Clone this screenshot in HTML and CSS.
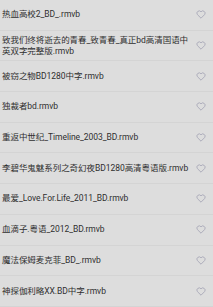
FILE: index.html
```html
<!DOCTYPE html>
<html lang="zh">
<head>
<meta charset="utf-8">
<link rel="stylesheet" href="styles.css">
</head>
<body>
<ul class="list">
  <li class="row"><span class="name">热血高校2_BD_.rmvb</span><svg class="heart" viewBox="0 0 12 11"><path d="M6 10 L1.6 5.6 A2.6 2.6 0 0 1 6 2.2 A2.6 2.6 0 0 1 10.4 5.6 Z"/></svg></li>
  <li class="row"><span class="name">致我们终将逝去的青春_致青春_真正bd高清国语中英双字完整版.rmvb</span><svg class="heart" viewBox="0 0 12 11"><path d="M6 10 L1.6 5.6 A2.6 2.6 0 0 1 6 2.2 A2.6 2.6 0 0 1 10.4 5.6 Z"/></svg></li>
  <li class="row"><span class="name">被窃之物BD1280中字.rmvb</span><svg class="heart" viewBox="0 0 12 11"><path d="M6 10 L1.6 5.6 A2.6 2.6 0 0 1 6 2.2 A2.6 2.6 0 0 1 10.4 5.6 Z"/></svg></li>
  <li class="row"><span class="name">独裁者bd.rmvb</span><svg class="heart" viewBox="0 0 12 11"><path d="M6 10 L1.6 5.6 A2.6 2.6 0 0 1 6 2.2 A2.6 2.6 0 0 1 10.4 5.6 Z"/></svg></li>
  <li class="row"><span class="name">重返中世纪_Timeline_2003_BD.rmvb</span><svg class="heart" viewBox="0 0 12 11"><path d="M6 10 L1.6 5.6 A2.6 2.6 0 0 1 6 2.2 A2.6 2.6 0 0 1 10.4 5.6 Z"/></svg></li>
  <li class="row"><span class="name">李碧华鬼魅系列之奇幻夜BD1280高清粤语版.rmvb</span><svg class="heart" viewBox="0 0 12 11"><path d="M6 10 L1.6 5.6 A2.6 2.6 0 0 1 6 2.2 A2.6 2.6 0 0 1 10.4 5.6 Z"/></svg></li>
  <li class="row"><span class="name">最爱_Love.For.Life_2011_BD.rmvb</span><svg class="heart" viewBox="0 0 12 11"><path d="M6 10 L1.6 5.6 A2.6 2.6 0 0 1 6 2.2 A2.6 2.6 0 0 1 10.4 5.6 Z"/></svg></li>
  <li class="row"><span class="name">血滴子.粤语_2012_BD.rmvb</span><svg class="heart" viewBox="0 0 12 11"><path d="M6 10 L1.6 5.6 A2.6 2.6 0 0 1 6 2.2 A2.6 2.6 0 0 1 10.4 5.6 Z"/></svg></li>
  <li class="row"><span class="name">魔法保姆麦克菲_BD_.rmvb</span><svg class="heart" viewBox="0 0 12 11"><path d="M6 10 L1.6 5.6 A2.6 2.6 0 0 1 6 2.2 A2.6 2.6 0 0 1 10.4 5.6 Z"/></svg></li>
  <li class="row"><span class="name">神探伽利略XX.BD中字.rmvb</span><svg class="heart" viewBox="0 0 12 11"><path d="M6 10 L1.6 5.6 A2.6 2.6 0 0 1 6 2.2 A2.6 2.6 0 0 1 10.4 5.6 Z"/></svg></li>
</ul>
</body>
</html>
```

FILE: styles.css
```css
html, body {
  margin: 0;
  padding: 0;
  background: #dddddd;
}
body {
  font-family: "Roboto", "Noto Sans CJK SC", sans-serif;
  color: #2f2f2f;
}
.list {
  list-style: none;
  margin: 0;
  padding: 0;
}
.row {
  height: 30.7px;
  box-sizing: border-box;
  display: flex;
  align-items: center;
  padding: 0 7px 0 2px;
  gap: 2px;
  border-bottom: 1px solid #d4d4d4;
}
.name {
  flex: 1;
  font-size: 8.5px;
  line-height: 11px;
  letter-spacing: -0.05px;
}
.heart {
  width: 10px;
  height: 9px;
  flex: none;
  fill: none;
  stroke: #a8a8b8;
  stroke-width: 1.1;
  stroke-linejoin: round;
}
```
